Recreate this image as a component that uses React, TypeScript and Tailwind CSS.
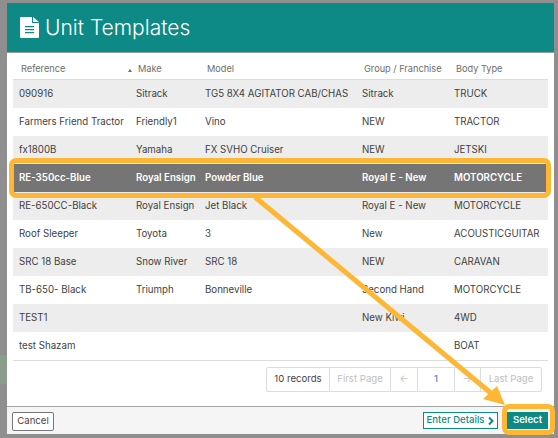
const columns = ['w-[123px] pl-[6px]', 'w-[69px]', 'w-[157px]', 'w-[92px]', 'w-[93px]']
const headerColumns = ['w-[123px] pl-[8px]', 'w-[69px] pl-[2px]', 'w-[157px] pl-[2px]', 'w-[92px] pl-[2px]', 'w-[93px] pl-[2px]']

const rows = [
  ['090916', 'Sitrack', 'TG5 8X4 AGITATOR CAB/CHAS', 'Sitrack', 'TRUCK'],
  ['Farmers Friend Tractor', 'Friendly1', 'Vino', 'NEW', 'TRACTOR'],
  ['fx1800B', 'Yamaha', 'FX SVHO Cruiser', 'NEW', 'JETSKI'],
  ['RE-350cc-Blue', 'Royal Ensign', 'Powder Blue', 'Royal E - New', 'MOTORCYCLE'],
  ['RE-650CC-Black', 'Royal Ensign', 'Jet Black', 'Royal E - New', 'MOTORCYCLE'],
  ['Roof Sleeper', 'Toyota', '3', 'New', 'ACOUSTICGUITAR'],
  ['SRC 18 Base', 'Snow River', 'SRC 18', 'NEW', 'CARAVAN'],
  ['TB-650- Black', 'Triumph', 'Bonneville', 'Second Hand', 'MOTORCYCLE'],
  ['TEST1', '', '', 'New Kiwi', '4WD'],
  ['test Shazam', '', '', '', 'BOAT'],
]

const headers = ['Reference', 'Make', 'Model', 'Group / Franchise', 'Body Type']

function TemplateRow({ cells, index }: { cells: string[]; index: number }) {
  const selected = index === 3
  const tone = selected
    ? 'bg-[#757575] text-white font-semibold'
    : index % 2 === 0
      ? 'bg-[#ededed] text-[#3f3f3f]'
      : 'bg-white text-[#3f3f3f]'
  return (
    <div className={`flex h-[28px] items-center text-[9.7px] ${tone}`}>
      {cells.map((cell, i) => (
        <div key={i} className={`${columns[i]} whitespace-nowrap`}>
          {cell}
        </div>
      ))}
    </div>
  )
}

export default function App() {
  return (
    <div className="relative h-[438px] w-[558px] overflow-hidden bg-[#8f8f8f] pl-[7px] pt-[3px] font-['Inter',sans-serif]">
      {/* Page behind the dialog */}
      <div className="absolute left-0 top-[355px] h-[29px] w-[7px] bg-[#8a9c8a]" />

      <div className="relative flex h-[431px] w-[547px] flex-col bg-white">
        {/* Header */}
        <div className="flex h-[50px] items-center gap-[6px] border-b border-[#8f9f9c] bg-[#0d8a85] pl-[13px] text-white">
          <svg className="h-[21px] w-[19px]" viewBox="0 0 19 21" fill="currentColor">
            <path
              fillRule="evenodd"
              d="M1 0h11v6h7v14a1 1 0 0 1-1 1H1a1 1 0 0 1-1-1V1a1 1 0 0 1 1-1zM13 0l6 5h-6zM5 9v1.300h9V9zM5 12v1.300h9V12zM5 15v1.300h9V15z"
            />
          </svg>
          <h1 className="text-[21px] font-light leading-none">Unit Templates</h1>
        </div>

        {/* Table */}
        <div className="flex-1 px-[6px]">
          <div className="flex h-[27px] items-center border-b border-[#dcdcdc] pt-[5px] text-[9.2px] text-[#6d6d6d]">
            {headers.map((h, i) => (
              <div key={h} className={`${headerColumns[i]} relative whitespace-nowrap`}>
                {h}
                {i === 0 && (
                  <span className="absolute right-[4px] top-[7px] h-0 w-0 border-x-[2.5px] border-b-[3px] border-x-transparent border-b-[#6d6d6d]" />
                )}
              </div>
            ))}
          </div>
          <div className="border-b border-[#dcdcdc]">
            {rows.map((r, i) => (
              <TemplateRow key={r[0]} cells={r} index={i} />
            ))}
          </div>

          {/* Pagination */}
          <div className="mt-[6px] flex justify-end pr-[6px]">
            <div className="flex h-[25px] items-center rounded-[2px] border border-[#dddddd] text-[9.6px] text-[#c0c0c0]">
              <div className="flex h-full w-[63px] items-center justify-center border-r border-[#dddddd] text-[#3f3f3f]">10 records</div>
              <div className="flex h-full w-[61px] items-center justify-center border-r border-[#dddddd]">First Page</div>
              <div className="flex h-full w-[27px] items-center justify-center border-r border-[#dddddd]">←</div>
              <div className="flex h-full w-[37px] items-center justify-center border-r border-[#dddddd] font-medium text-[#4a8ad4]">1</div>
              <div className="flex h-full w-[26px] items-center justify-center border-r border-[#dddddd]">→</div>
              <div className="flex h-full w-[60px] items-center justify-center">Last Page</div>
            </div>
          </div>
        </div>

        {/* Footer */}
        <div className="flex h-[28px] items-start justify-between border-t border-[#a3a3a3] bg-[#f5f5f5] pl-[5px] pr-[6px] pt-[5px]">
          <button className="h-[19px] w-[42px] rounded-[2px] border border-[#777777] bg-white text-[9.6px] text-[#444444]">Cancel</button>
          <div className="flex gap-[9px]">
            <button className="flex h-[17px] w-[75px] items-center justify-center gap-[4px] border border-[#0d8a85] bg-white text-[9.6px] font-medium text-[#0d8a85]">
              Enter Details
              <svg className="h-[8px] w-[6px]" viewBox="0 0 6 8" fill="none" stroke="currentColor" strokeWidth="2">
                <path d="M1 .5 4.500 4 1 7.500" />
              </svg>
            </button>
            <button className="h-[17px] w-[41px] bg-[#0d8a85] text-[9.6px] font-semibold text-white">Select</button>
          </div>
        </div>
      </div>

      {/* Annotation highlights */}
      <div className="absolute left-[9px] top-[158px] h-[40px] w-[542px] rounded-[7px] border-[5px] border-[#fdb735]" />
      <div className="absolute left-[502px] top-[404px] h-[31px] w-[53px] rounded-[7px] border-[5px] border-[#fdb735]" />
      <svg className="pointer-events-none absolute left-0 top-0 h-[438px] w-[558px]" viewBox="0 0 558 438">
        <path d="M255 197 492 394" stroke="#fdb735" strokeWidth="5" />
        <path d="M505 405 483 399 497 386z" fill="#fdb735" />
      </svg>
    </div>
  )
}
